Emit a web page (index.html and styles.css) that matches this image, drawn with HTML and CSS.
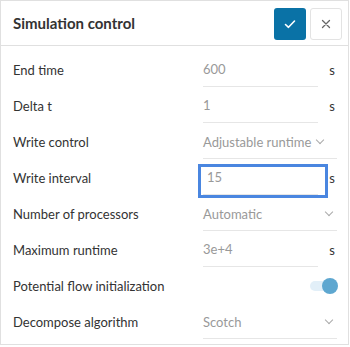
FILE: index.html
```html
<!DOCTYPE html>
<html>
<head>
  <meta charset="utf-8">
  <title>Simulation control</title>
  <link rel="stylesheet" href="styles.css">
</head>
<body>
  <div class="panel">
    <div class="header">
      <h1 class="title">Simulation control</h1>
      <button class="btn btn-ok">
        <svg width="14" height="14" viewBox="0 0 14 14"><path d="M2.5 7.5 L5.5 10.3 L11.5 4" fill="none" stroke="#fff" stroke-width="1.6" stroke-linecap="round" stroke-linejoin="round"/></svg>
      </button>
      <button class="btn btn-close">
        <svg width="10" height="10" viewBox="0 0 10 10"><path d="M1.5 1.5 L8.5 8.5 M8.5 1.5 L1.5 8.5" stroke="#666" stroke-width="1.3" stroke-linecap="round"/></svg>
      </button>
    </div>

    <div class="form">
      <div class="row">
        <span class="label">End time</span>
        <div class="field">600</div>
        <span class="unit">s</span>
      </div>
      <div class="row">
        <span class="label">Delta t</span>
        <div class="field">1</div>
        <span class="unit">s</span>
      </div>
      <div class="row">
        <span class="label">Write control</span>
        <div class="select select-long"><span class="value">Adjustable runtime</span><span class="chev"></span></div>
      </div>
      <div class="row">
        <span class="label">Write interval</span>
        <div class="field focused">15<span class="focus-ring"></span></div>
        <span class="unit">s</span>
      </div>
      <div class="row">
        <span class="label">Number of processors</span>
        <div class="select"><span class="value">Automatic</span><span class="chev"></span></div>
      </div>
      <div class="row">
        <span class="label">Maximum runtime</span>
        <div class="field">3e+4</div>
        <span class="unit">s</span>
      </div>
      <div class="row">
        <span class="label">Potential flow initialization</span>
        <div class="toggle-cell"><span class="toggle"><span class="knob"></span></span></div>
      </div>
      <div class="row">
        <span class="label">Decompose algorithm</span>
        <div class="select"><span class="value">Scotch</span><span class="chev"></span></div>
      </div>
    </div>
  </div>
</body>
</html>
```

FILE: styles.css
```css
body {
  margin: 0;
  font-family: Lato, "Open Sans", sans-serif;
  color: #333;
  background: #fff;
}

.panel {
  width: 349px;
  height: 345px;
  box-sizing: border-box;
  border: 1px solid #e0e0e0;
}

.header {
  height: 44px;
  border-bottom: 1px solid #e0e0e0;
  display: flex;
  align-items: center;
  padding: 0 6px 0 12px;
  gap: 4px;
}

.title {
  flex: 1;
  margin: 0;
  font-size: 15px;
  font-weight: 700;
  color: #333;
}

.btn {
  width: 32px;
  height: 32px;
  border-radius: 3px;
  padding: 0;
  display: flex;
  align-items: center;
  justify-content: center;
  margin-top: 1px;
}

.btn-ok {
  background: #0a72a6;
  border: none;
}

.btn-close {
  background: #fff;
  border: 1px solid #e3e3e3;
}

.form {
  padding: 6px 0 0 12px;
}

.row {
  height: 36px;
  display: grid;
  grid-template-columns: 190px 115px 19px;
  align-items: center;
  font-size: 13px;
}

.label {
  color: #333;
}

.field {
  position: relative;
  align-self: start;
  height: 34px;
  line-height: 35px;
  border-bottom: 1px solid #e6e6e6;
  color: #999;
}

.unit {
  text-align: right;
  padding-right: 2px;
  color: #333;
}

.focused {
  padding-left: 4px;
}

.focus-ring {
  position: absolute;
  left: -5px;
  right: -10px;
  top: 4px;
  bottom: -4px;
  border: 3px solid #4a86e0;
}

.select {
  grid-column: 2 / 4;
  align-self: start;
  height: 35px;
  border-bottom: 1px solid #e6e6e6;
  display: flex;
  align-items: center;
  padding-top: 2px;
  box-sizing: border-box;
  color: #999;
}

.select .value {
  flex: 1;
}

.select-long .value {
  flex: none;
}

.chev {
  width: 5px;
  height: 5px;
  border-right: 1px solid #aaa;
  border-bottom: 1px solid #aaa;
  transform: rotate(45deg);
  margin: 0 5px 4px 0;
}

.select-long .chev {
  margin-left: 6px;
}

.toggle-cell {
  grid-column: 2 / 4;
  display: flex;
  justify-content: flex-end;
}

.toggle {
  position: relative;
  width: 22px;
  height: 10px;
  border-radius: 5px;
  background: #e2eff8;
  margin-right: 5px;
}

.knob {
  position: absolute;
  right: -6px;
  top: -3px;
  width: 16px;
  height: 16px;
  border-radius: 50%;
  background: #5ea7d0;
}
```
